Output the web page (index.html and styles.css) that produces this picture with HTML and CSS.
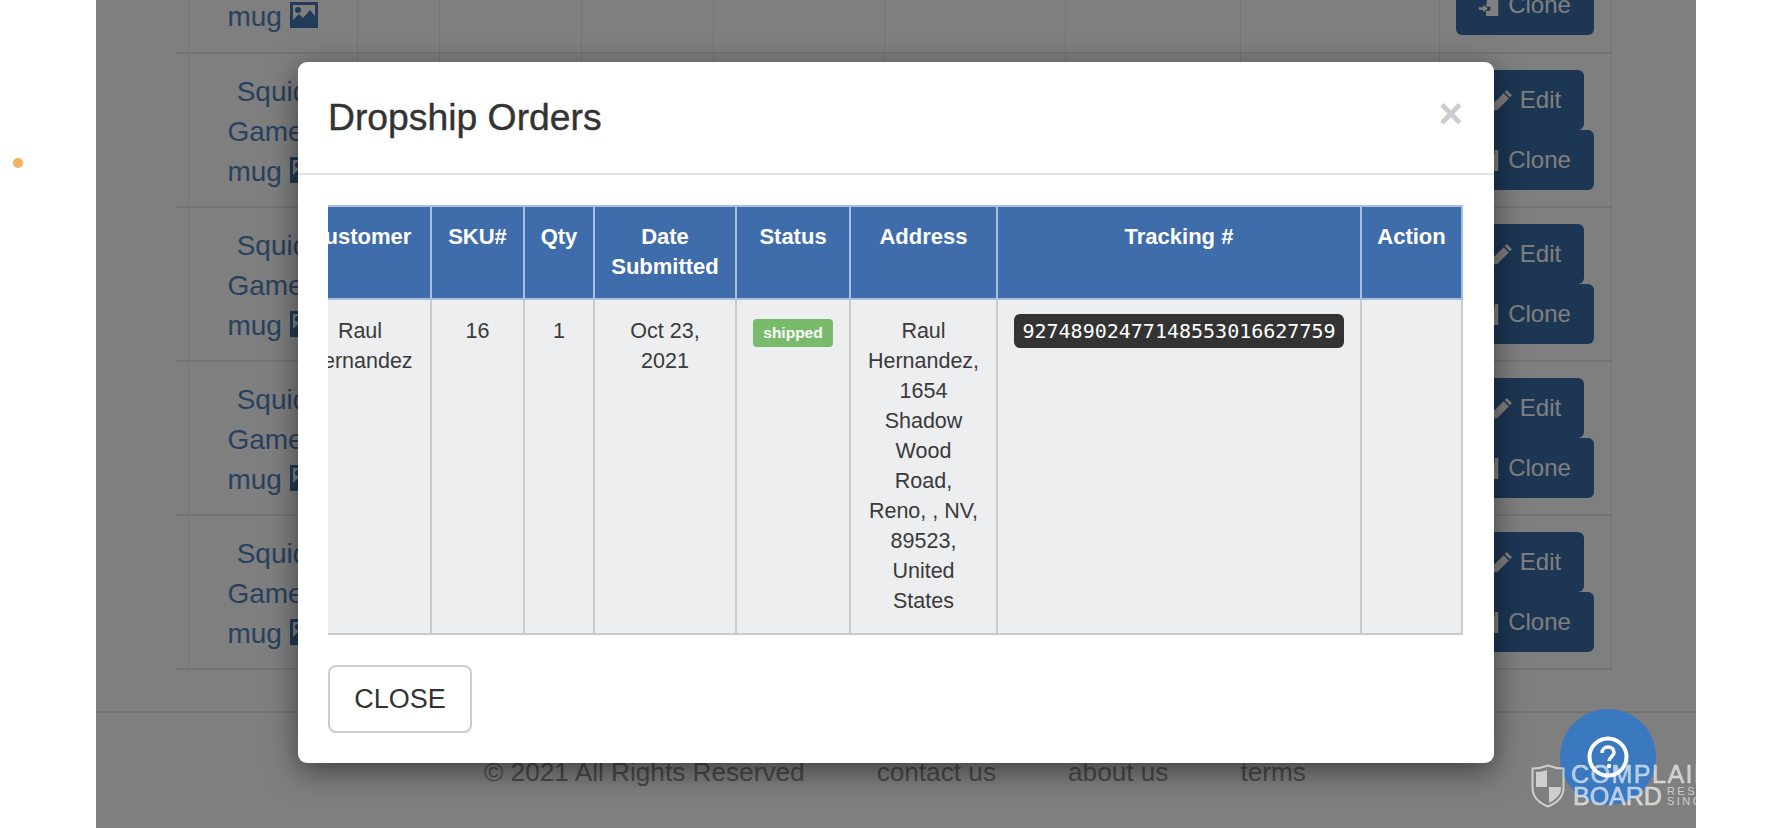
FILE: index.html
```html
<!DOCTYPE html>
<html lang="en">
<head>
  <meta charset="UTF-8" />
  <meta name="viewport" content="width=device-width, initial-scale=1.0"/>
  <title>Dropship Orders</title>
  <link rel="stylesheet" href="styles.css">
</head>
<body>
  <svg class="icon-defs" width="0" height="0">
    <symbol id="i-picture" viewBox="0 0 28 26">
      <path fill-rule="evenodd" d="M0 0h28v26H0zM3 3v15l6-6 4 4 7-8 5 6V3z"/>
      <circle cx="8" cy="8" r="3"/>
    </symbol>
    <symbol id="i-pencil" viewBox="0 0 20 20">
      <path d="M15 0l5 5-2 2-5-5zM12 3l5 5L6 19l-6 1 1-6z"/>
    </symbol>
    <symbol id="i-clone" viewBox="0 0 24 24">
      <path d="M10 0h12v24H8v-6h5v-5H8zM14 0v5h4V0z" fill-rule="evenodd"/>
      <path d="M0 14h5v-3l5 4.500-5 4.500v-3H0z"/>
    </symbol>
  </svg>

  <span class="status-dot"></span>

  <div class="site" id="site">
    <div class="listing">
      <table class="products">
        <colgroup>
          <col class="c-gap"><col class="c-name"><col class="c-a"><col class="c-b"><col class="c-c"><col class="c-d"><col class="c-e"><col class="c-f"><col class="c-g"><col class="c-act">
        </colgroup>
        <tbody>
          <tr>
            <td class="gap"></td>
            <td><a class="name">Squid Games mug <svg class="pic"><use href="#i-picture"/></svg></a></td>
            <td></td><td></td><td></td><td></td><td></td><td></td><td></td>
            <td class="actions">
              <div class="action-stack">
                <a class="btn btn-edit"><svg class="ico"><use href="#i-pencil"/></svg>Edit</a>
                <a class="btn"><svg class="ico"><use href="#i-clone"/></svg>Clone</a>
              </div>
            </td>
          </tr>
          <tr>
            <td class="gap"></td>
            <td><a class="name">Squid Games mug <svg class="pic"><use href="#i-picture"/></svg></a></td>
            <td></td><td></td><td></td><td></td><td></td><td></td><td></td>
            <td class="actions">
              <div class="action-stack">
                <a class="btn btn-edit"><svg class="ico"><use href="#i-pencil"/></svg>Edit</a>
                <a class="btn"><svg class="ico"><use href="#i-clone"/></svg>Clone</a>
              </div>
            </td>
          </tr>
          <tr>
            <td class="gap"></td>
            <td><a class="name">Squid Games mug <svg class="pic"><use href="#i-picture"/></svg></a></td>
            <td></td><td></td><td></td><td></td><td></td><td></td><td></td>
            <td class="actions">
              <div class="action-stack">
                <a class="btn btn-edit"><svg class="ico"><use href="#i-pencil"/></svg>Edit</a>
                <a class="btn"><svg class="ico"><use href="#i-clone"/></svg>Clone</a>
              </div>
            </td>
          </tr>
          <tr>
            <td class="gap"></td>
            <td><a class="name">Squid Games mug <svg class="pic"><use href="#i-picture"/></svg></a></td>
            <td></td><td></td><td></td><td></td><td></td><td></td><td></td>
            <td class="actions">
              <div class="action-stack">
                <a class="btn btn-edit"><svg class="ico"><use href="#i-pencil"/></svg>Edit</a>
                <a class="btn"><svg class="ico"><use href="#i-clone"/></svg>Clone</a>
              </div>
            </td>
          </tr>
          <tr>
            <td class="gap"></td>
            <td><a class="name">Squid Games mug <svg class="pic"><use href="#i-picture"/></svg></a></td>
            <td></td><td></td><td></td><td></td><td></td><td></td><td></td>
            <td class="actions">
              <div class="action-stack">
                <a class="btn btn-edit"><svg class="ico"><use href="#i-pencil"/></svg>Edit</a>
                <a class="btn"><svg class="ico"><use href="#i-clone"/></svg>Clone</a>
              </div>
            </td>
          </tr>
        </tbody>
      </table>
    </div>

    <footer class="site-footer">
      <span>&copy; 2021 All Rights Reserved</span>
      <a>contact us</a>
      <a>about us</a>
      <a>terms</a>
    </footer>

    <div class="backdrop"></div>

    <div class="modal">
      <div class="modal-header">
        <h4 class="modal-title">Dropship Orders</h4>
        <button class="close">&times;</button>
      </div>
      <div class="modal-body">
        <div class="table-scroll">
          <table class="orders">
            <thead>
              <tr>
                <th class="o-customer">Customer</th>
                <th class="o-sku">SKU#</th>
                <th class="o-qty">Qty</th>
                <th class="o-date">Date Submitted</th>
                <th class="o-status">Status</th>
                <th class="o-address">Address</th>
                <th class="o-tracking">Tracking #</th>
                <th class="o-action">Action</th>
              </tr>
            </thead>
            <tbody>
              <tr>
                <td>Raul Hernandez</td>
                <td>16</td>
                <td>1</td>
                <td>Oct 23, 2021</td>
                <td><span class="label">shipped</span></td>
                <td>Raul Hernandez, 1654 Shadow Wood Road, Reno, , NV, 89523, United States</td>
                <td><kbd class="tracking">92748902477148553016627759</kbd></td>
                <td></td>
              </tr>
            </tbody>
          </table>
        </div>
      </div>
      <div class="modal-footer">
        <button class="btn-close">CLOSE</button>
      </div>
    </div>

    <button class="help" aria-label="Help">
      <svg width="44" height="44" viewBox="0 0 44 44">
        <circle cx="22" cy="22" r="18.500" fill="none" stroke="#fff" stroke-width="4"/>
        <path d="M16 18c0-4 3-6 6-6s6 2 6 5.500c0 4-5 4.500-5 8.500" fill="none" stroke="#fff" stroke-width="3.500"/>
        <circle cx="23" cy="31" r="2.200" fill="#fff"/>
      </svg>
    </button>

    <div class="watermark">
      <svg class="shield" width="34" height="44" viewBox="0 0 34 44">
        <path d="M17 1.500C12 3.500 7 4.500 1.500 4.500V24c0 9 7 15 15.500 18.500C25.500 39 32.500 33 32.500 24V4.500C27 4.500 22 3.500 17 1.500z" fill="none" stroke="currentColor" stroke-width="2"/>
        <path d="M5 8c4 0 8-1 11-2v17H5zM18 23h12v2c0 6-6 11-12 14z" fill="currentColor"/>
      </svg>
      <div class="wm-text">
        <div class="wm-top">COMPLAINTS</div>
        <div class="wm-bottom">
          <span class="wm-board">BOARD</span>
          <span class="wm-small">RESOLVED<br>SINCE 2009</span>
        </div>
      </div>
    </div>
  </div>
</body>
</html>
```

FILE: styles.css
```css
* {
  box-sizing: border-box;
}
html, body {
  margin: 0;
  height: 828px;
  overflow: hidden;
  background: #fff;
}
body {
  font-family: "Liberation Sans", Arial, sans-serif;
  color: #333;
}
.icon-defs {
  position: absolute;
}
.status-dot {
  position: absolute;
  left: 13px;
  top: 158px;
  width: 10px;
  height: 10px;
  border-radius: 50%;
  background: #f2b25e;
}
.site {
  position: relative;
  width: 1600px;
  height: 828px;
  margin: 0 auto;
  overflow: hidden;
  background: #fff;
}

/* page behind the dialog */
.listing {
  padding-left: 80px;
  margin-top: -101px;
}
.products {
  width: 1435px;
  table-layout: fixed;
  border-collapse: collapse;
}
.c-gap { width: 12px; }
.c-name { width: 169px; }
.c-a { width: 82px; }
.c-b { width: 142px; }
.c-c { width: 132px; }
.c-d { width: 171px; }
.c-e { width: 181px; }
.c-f { width: 175px; }
.c-g { width: 199px; }
.c-act { width: 172px; }
.products td {
  height: 154px;
  padding: 18px 8px 14px;
  border: 1px solid #e8e8e8;
  border-width: 0 1px 2px 1px;
  text-align: center;
  vertical-align: top;
}
.products td.gap {
  border-left: none;
  padding: 0;
}
.name {
  display: block;
  width: 110px;
  margin: 0 auto;
  font-size: 28px;
  line-height: 40px;
  color: #5283bf;
}
.pic {
  width: 28px;
  height: 26px;
  fill: #4478ae;
  vertical-align: -2px;
}
.products td.actions {
  padding: 16px 0 0;
}
.action-stack {
  display: flex;
  flex-direction: column;
  align-items: center;
}
.btn {
  display: flex;
  align-items: center;
  height: 60px;
  padding: 0 23px;
  font-size: 24px;
  color: #fff;
  background: #386ca6;
  border-radius: 6px;
}
.btn-edit {
  margin-left: 2px;
}
.ico {
  width: 21px;
  height: 21px;
  margin-right: 8px;
  fill: #fff;
}
.site-footer {
  display: flex;
  gap: 72px;
  margin-top: 41px;
  padding: 44px 0 0 388px;
  border-top: 2px solid #e4e4e4;
  font-size: 26.200px;
  line-height: 30px;
  color: #949494;
}
.backdrop {
  position: absolute;
  inset: 0;
  background: rgba(0,0,0,0.5);
}

/* dialog */
.modal {
  position: absolute;
  left: 202px;
  top: 62px;
  width: 1196px;
  height: 701px;
  background: #fff;
  border-radius: 9px;
  box-shadow: 0 8px 30px rgba(0,0,0,0.5);
}
.modal-header {
  display: flex;
  justify-content: space-between;
  align-items: flex-start;
  height: 113px;
  padding: 0 30px;
  border-bottom: 2px solid #e5e5e5;
}
.modal-title {
  margin: 33px 0 0;
  font-size: 37.300px;
  line-height: 44px;
  font-weight: normal;
  color: #333;
  -webkit-text-stroke: 0.4px #333;
}
.close {
  margin: 28px 1px 0 0;
  padding: 0;
  border: none;
  background: none;
  font-family: inherit;
  font-size: 42px;
  line-height: 48px;
  font-weight: bold;
  color: #ccc;
}
.modal-body {
  padding: 30px 31px 0 30px;
}
.table-scroll {
  overflow: hidden;
}
.orders {
  width: 1173px;
  margin-left: -40px;
  table-layout: fixed;
  border-collapse: collapse;
  font-size: 21.500px;
  line-height: 30px;
}
.o-customer { width: 142px; }
.o-sku { width: 93px; }
.o-qty { width: 70px; }
.o-date { width: 142px; }
.o-status { width: 114px; }
.o-address { width: 147px; }
.o-tracking { width: 364px; }
.o-action { width: 101px; }
.orders th {
  padding: 15px 14px 16px;
  font-size: 22px;
  color: #fff;
  background: #3f6dab;
  border: 2px solid #a9bfdc;
  vertical-align: top;
}
.orders td {
  padding: 16px 15px 17px;
  text-align: center;
  vertical-align: top;
  color: #3a3a3a;
  background: #eceef0;
  border: 2px solid #c8cacc;
}
.label {
  display: block;
  width: 80px;
  height: 28px;
  margin: 3px auto 0;
  font-size: 15.500px;
  line-height: 28px;
  font-weight: bold;
  color: #fff;
  background: #79ba6b;
  border-radius: 4px;
}
.tracking {
  display: inline-block;
  height: 34px;
  margin-top: -2px;
  padding: 0 8px;
  font-family: "DejaVu Sans Mono", monospace;
  font-size: 20px;
  line-height: 34px;
  color: #fff;
  background: #333;
  border-radius: 6px;
}
.modal-footer {
  padding: 30px;
}
.btn-close {
  width: 144px;
  height: 68px;
  padding: 0;
  font-family: inherit;
  font-size: 27px;
  color: #333;
  background: #fff;
  border: 2px solid #ccc;
  border-radius: 8px;
}

/* floating stuff bottom right */
.help {
  position: absolute;
  left: 1464px;
  top: 709px;
  display: flex;
  align-items: center;
  justify-content: center;
  width: 96px;
  height: 96px;
  padding: 0;
  border: none;
  border-radius: 50%;
  background: #3a78c0;
}
.watermark {
  position: absolute;
  left: 1435px;
  top: 764px;
  display: flex;
  gap: 6px;
  color: rgba(255,255,255,0.62);
  white-space: nowrap;
}
.wm-top {
  font-size: 25px;
  line-height: 21px;
  letter-spacing: 1.500px;
  -webkit-text-stroke: 0.5px rgba(255,255,255,0.62);
}
.wm-bottom {
  display: flex;
  gap: 5px;
  align-items: center;
  margin-left: 2px;
}
.wm-board {
  font-size: 25px;
  line-height: 22px;
  -webkit-text-stroke: 0.6px rgba(255,255,255,0.62);
}
.wm-small {
  font-size: 11px;
  line-height: 10px;
  letter-spacing: 2.500px;
}
```
